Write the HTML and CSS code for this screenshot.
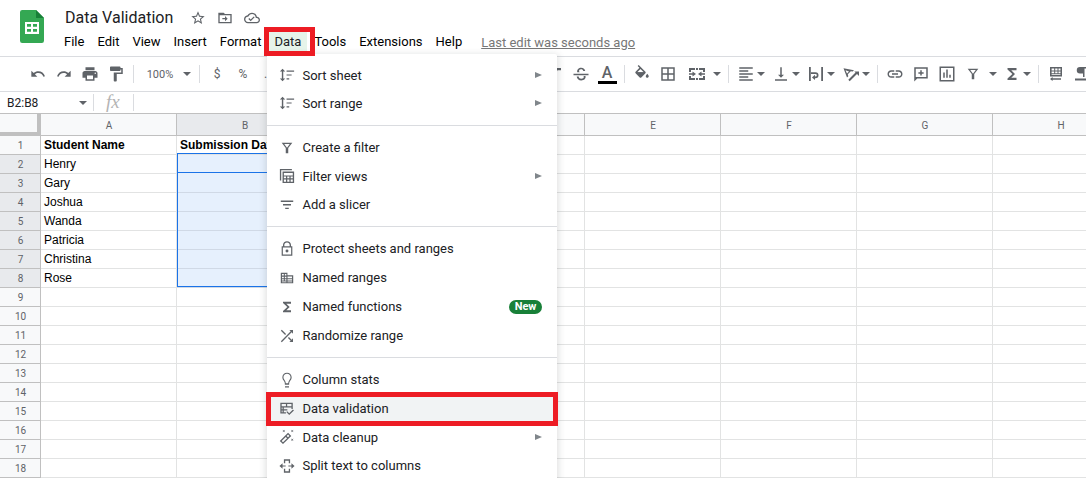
FILE: index.html
```html
<!DOCTYPE html>
<html lang="en">
<head>
<meta charset="utf-8">
<title>Data Validation</title>
<link rel="stylesheet" href="styles.css">
</head>
<body>
<svg class="sprite" aria-hidden="true">
  <symbol id="i-undo" viewBox="0 0 24 24"><path d="M12.5 8c-2.65 0-5.05.99-6.9 2.6L2 7v9h9l-3.62-3.62c1.39-1.16 3.16-1.88 5.12-1.88 3.54 0 6.55 2.31 7.6 5.5l2.37-.78C21.08 11.03 17.15 8 12.500 8z"/></symbol>
  <symbol id="i-redo" viewBox="0 0 24 24"><path d="M18.4 10.6C16.55 8.99 14.15 8 11.5 8c-4.65 0-8.58 3.03-9.96 7.22L3.9 16c1.05-3.19 4.05-5.500 7.600-5.500 1.950 0 3.730.72 5.120 1.880L13 16h9V7l-3.600 3.600z"/></symbol>
  <symbol id="i-print" viewBox="0 0 24 24"><path d="M19 8H5c-1.660 0-3 1.340-3 3v6h4v4h12v-4h4v-6c0-1.660-1.340-3-3-3zm-3 11H8v-5h8v5zm3-7c-.550 0-1-.450-1-1s.450-1 1-1 1 .450 1 1-.450 1-1 1zm-1-9H6v4h12V3z"/></symbol>
  <symbol id="i-paint" viewBox="0 0 24 24"><path d="M18 4V3c0-.550-.450-1-1-1H5c-.550 0-1 .450-1 1v4c0 .550.450 1 1 1h12c.550 0 1-.450 1-1V6h1v4H9v11c0 .550.450 1 1 1h2c.550 0 1-.450 1-1v-9h8V4h-3z"/></symbol>
  <symbol id="i-italic" viewBox="0 0 24 24"><path d="M10 4v3h2.200l-3.400 10H6v3h8v-3h-2.200l3.400-10H20V4z"/></symbol>
  <symbol id="i-strike" viewBox="0 0 24 24"><path d="M2 11.500h20v2H2zM7 9.800C6.200 6 9 3.500 12.200 3.500c3 0 5.200 1.700 5.400 4.500h-2.600c-.2-1.500-1.300-2.300-2.900-2.300-2.700 0-3.500 2.400-1.900 4.100zM6.300 15.300h2.600c.3 2 1.600 2.900 3.500 2.900 2 0 3.300-.9 3.300-2.300 0-.4-.1-.8-.3-1.200h2.600c.8 3.500-1.900 5.800-5.600 5.800-3.500 0-6-2-6.100-5.200z"/></symbol>
  <symbol id="i-fill" viewBox="0 0 24 24"><path d="M16.560 8.940L7.620 0 6.210 1.410l2.380 2.380-5.150 5.150c-.590.590-.590 1.540 0 2.120l5.500 5.500c.290.290.680.440 1.060.440s.770-.150 1.060-.440l5.500-5.500c.590-.580.590-1.530 0-2.120zM5.700 9.500L10 5.200l4.300 4.300zM19 11.500s-2 2.170-2 3.500c0 1.100.900 2 2 2s2-.900 2-2c0-1.330-2-3.500-2-3.500z"/><path d="M4.500 9.500h11L10 15z"/></symbol>
  <symbol id="i-borders" viewBox="0 0 24 24"><path d="M3 3v18h18V3H3zm8 16H5v-6h6v6zm0-8H5V5h6v6zm8 8h-6v-6h6v6zm0-8h-6V5h6v6z"/></symbol>
  <symbol id="i-merge" viewBox="0 0 18 18"><path d="M1 3h6v2H3v2H1zm10 0h6v4h-2V5h-4zM1 11h2v2h4v2H1zm14 0h2v4h-6v-2h4zM8 3h2v2H8zm0 10h2v2H8zM1 8.200h3.500V6.500L8 9l-3.500 2.500V9.800H1zm16 0h-3.500V6.500L10 9l3.500 2.500V9.800H17z"/></symbol>
  <symbol id="i-align" viewBox="0 0 24 24"><path d="M15 15H3v2h12v-2zm0-8H3v2h12V7zM3 13h18v-2H3v2zm0 8h18v-2H3v2zM3 3v2h18V3H3z"/></symbol>
  <symbol id="i-bottom" viewBox="0 0 24 24"><path d="M16 13h-3V3h-2v10H8l4 4 4-4zM4 19v2h16v-2H4z"/></symbol>
  <symbol id="i-wrap" viewBox="0 0 18 18"><path d="M2 2h1.800v14H2zm12.200 0H16v14h-1.800zM4 7.200h4.500a3 3 0 0 1 0 6H8V15l-3-2.600L8 9.800v1.700h.5a1.300 1.300 0 0 0 0-2.600H4z"/></symbol>
  <symbol id="i-rotate" viewBox="0 0 18 18"><path fill-rule="evenodd" d="M1.500 3.200l10.500 2-1.300 1.300-1.900-.3-3 3 .5 2-1.300 1.300zm2 2l1.500 3.300 2-2.100zM6.300 14.800l7.200-7.200-1.200-1.200H17v4.600l-2-2-7.300 7.200z"/></symbol>
  <symbol id="i-link" viewBox="0 0 24 24"><path d="M3.900 12c0-1.710 1.390-3.100 3.100-3.100h4V7H7c-2.760 0-5 2.240-5 5s2.240 5 5 5h4v-1.900H7c-1.710 0-3.100-1.390-3.100-3.100zM8 13h8v-2H8v2zm9-6h-4v1.900h4c1.710 0 3.100 1.390 3.100 3.100s-1.390 3.100-3.100 3.100h-4V17h4c2.760 0 5-2.240 5-5s-2.240-5-5-5z"/></symbol>
  <symbol id="i-comment" viewBox="0 0 24 24"><path d="M21 3H3v19l4-4h14V3zm-2 13H5V5h14v11zm-8-2h2v-2.500h2.500v-2H13V7h-2v2.500H8.500v2H11z"/></symbol>
  <symbol id="i-chart" viewBox="0 0 24 24"><path d="M2 2v20h20V2zm18 18H4V4h16zM7 10h2v7H7zm4-4h2v11h-2zm4 7h2v4h-2z"/></symbol>
  <symbol id="i-filter" viewBox="0 0 18 18"><path fill-rule="evenodd" d="M3 3h12l-4.600 6V15H7.600V9zm2.900 1.500L9 8.600l3.100-4.100z"/></symbol>
  <symbol id="i-sigma" viewBox="0 0 24 24"><path d="M18 4H6v2l6.500 6L6 18v2h12v-3h-7l5-5-5-5h7z"/></symbol>
  <symbol id="i-sheet" viewBox="0 0 18 18"><path fill-rule="evenodd" d="M3 2h12v9.500H3zm1.600 1.500v2h2.600v-2zm3.600 0v2h2.300v-2zm3.300 0v2h2v-2zm-6.900 3v1.700h2.600V6.500zm3.600 0v1.700h2.300V6.500zm3.300 0v1.700h2V6.500zM4.600 9.200V10h8.900v-.8zM3 14l2.600-2v1.200H14v1.600H5.600V16z"/></symbol>
  <symbol id="i-para" viewBox="0 0 18 18"><path d="M7 2h9v1.500h-1.500V12H13V3.500h-1.500V12H10V8.500H7A3.250 3.250 0 0 1 7 2zM2 13.500h14v2H2z"/></symbol>
  <symbol id="i-star" viewBox="0 0 24 24"><path d="M22 9.240l-7.190-.620L12 2 9.190 8.630 2 9.240l5.460 4.730L5.820 21 12 17.270 18.180 21l-1.630-7.030L22 9.240zM12 15.400l-3.760 2.270 1-4.280-3.320-2.880 4.380-.380L12 6.100l1.710 4.040 4.380.380-3.320 2.880 1 4.280L12 15.400z"/></symbol>
  <symbol id="i-move" viewBox="0 0 24 24"><path d="M20 6h-8l-2-2H2v16h20V6h-2zm0 12H4V8h16v10zm-8-1l4-4-4-4v3H8v2h4z"/></symbol>
  <symbol id="i-cloud" viewBox="0 0 24 24"><path d="M19.350 10.040C18.670 6.590 15.640 4 12 4 9.110 4 6.600 5.640 5.350 8.040 2.340 8.360 0 10.910 0 14c0 3.310 2.690 6 6 6h13c2.760 0 5-2.240 5-5 0-2.640-2.050-4.780-4.650-4.960zM19 18H6c-2.210 0-4-1.790-4-4 0-2.050 1.530-3.760 3.560-3.970l1.070-.110.500-.950C8.080 7.140 9.940 6 12 6c2.620 0 4.880 1.860 5.390 4.430l.300 1.500 1.530.110c1.560.100 2.780 1.410 2.780 2.960 0 1.650-1.350 3-3 3zm-9-3.820l-2.090-2.090L6.500 13.500 10 17l6.010-6.010-1.410-1.410z"/></symbol>
  <symbol id="i-sort" viewBox="0 0 18 18"><path d="M4 2l3 3.200H4.800v7.600H7L4 16l-3-3.200h2.200V5.200H1zM8.500 4H17v1.400H8.500zm0 4.300h5.700v1.400H8.500zm0 4.300h3v1.400h-3z"/></symbol>
  <symbol id="i-views" viewBox="0 0 18 18"><path fill-rule="evenodd" d="M1 1h13.500v1.500h-12V14H1zM4 4h13v13H4zm1.500 1.500v2.800h10V5.500zm0 4.200v1.900h2.400V9.700zm3.800 0v1.900h2.400V9.700zm3.800 0v1.900h2.400V9.700zM5.500 13v2.500h2.400V13zm3.800 0v2.500h2.400V13zm3.800 0v2.500h2.400V13z"/></symbol>
  <symbol id="i-slicer" viewBox="0 0 18 18"><path d="M2 4h14v1.500H2zm2.500 4h9v1.500h-9zM7 12h4v1.500H7z"/></symbol>
  <symbol id="i-lock" viewBox="0 0 24 24"><path d="M18 8V6c0-3-2.500-5.500-6-5.500S6 3 6 6v2H4v14h16V8zM8 6c0-2.200 1.700-3.700 4-3.700S16 3.800 16 6v2H8zm10.200 14.300H5.800V9.800h12.400zM12 17.200a2.200 2.200 0 1 0 0-4.400 2.200 2.200 0 0 0 0 4.400z"/></symbol>
  <symbol id="i-ranges" viewBox="0 0 18 18"><path fill-rule="evenodd" d="M2 3h7.500v3H16v9H2zm1.400 1.400v1.900h2V4.400zm3.200 0v1.900h1.700V4.400zM3.400 7.500v1.800h2V7.500zm3.200 0v1.800h1.700V7.500zm-3.200 3v1.200h2v-1.200zm3.200 0v1.200h1.700v-1.200zm-3.200 2.400v.8h4.900v-.8zm6.200-5.500v1.900h5V7.400zm0 3.100v1.200h5v-1.200zm0 2.400v.8h5v-.8z"/></symbol>
  <symbol id="i-shuffle" viewBox="0 0 24 24"><path d="M10.590 9.170L4.200 2.800 2.800 4.200l6.370 6.370 1.420-1.400zM15.500 3l2.040 2.040L2.800 19.800l1.400 1.400L18.960 6.460 21 8.500V3h-5.500zm-.670 10.410l-1.410 1.410 4.130 4.130L15.500 21H21v-5.500l-2.040 2.040-4.130-4.130z"/></symbol>
  <symbol id="i-bulb" viewBox="0 0 24 24"><path d="M9 21.500h6v1.800H9zm3-20.500c-4 0-7 3-7 7 0 3 1.500 4.500 3 6.500.6 1 .8 2 .8 4.500h6.400c0-2.500.2-3.500.8-4.500 1.500-2 3-3.500 3-6.500 0-4-3-7-7-7zm1.800 16h-3.600c0-1.600-.4-2.800-1.200-4-1.200-1.700-2.300-2.800-2.300-5C6.700 5 9 2.800 12 2.800S17.300 5 17.300 8c0 2.200-1.100 3.300-2.300 5-.8 1.200-1.200 2.400-1.200 4z"/></symbol>
  <symbol id="i-valid" viewBox="0 0 18 18"><path fill-rule="evenodd" d="M1.500 2h14v7H14V7.400H5.400v1.800h4v1.400h-4v2h2.400V14H1.500zM3 3.500V6h4.800V3.500zm6.200 0V6H14V3.500zM3 7.400v1.800h1V7.400zm0 3.200v2h1v-2zM8.200 12.500l1.100-1 2.200 2.200 4.200-4.200 1.100 1.100-5.300 5.200z"/></symbol>
  <symbol id="i-wand" viewBox="0 0 18 18"><path fill-rule="evenodd" d="M10.200 4.200l3.600 3.600-9.300 9.200L.9 13.400zm0 2.100L8.600 7.900l1.500 1.500 1.600-1.600zM3 13.400l1.500 1.500 4.600-4.500L7.600 8.900z"/><path d="M4 .8l1.400.8L6.800.8 6 2.200l.8 1.400-1.400-.8-1.400.8.800-1.400zM13.500.8l1.400.8 1.400-.8-.8 1.400.8 1.400-1.400-.8-1.400.8.800-1.400zM13.500 10.600l1.400.8 1.400-.8-.8 1.400.8 1.400-1.400-.8-1.400.8.8-1.400z"/></symbol>
  <symbol id="i-split" viewBox="0 0 18 18"><path d="M5.500 1.500h7V6H11V3H7v3H5.500zm0 10.500H7v3h4v-3h1.500v4.500h-7zM.5 9L4 5.800v2.500h3.500v1.400H4v2.500zm17 0L14 5.800v2.500h-3.500v1.400H14v2.500z"/></symbol>
</svg>

<header class="header">
  <svg class="logo" viewBox="0 0 24 33" aria-label="Sheets">
    <path fill="#34a853" d="M2.200 0H16l8 8v22.800a2.200 2.200 0 0 1-2.200 2.200H2.200A2.200 2.200 0 0 1 0 30.800V2.200A2.200 2.200 0 0 1 2.200 0z"/>
    <path fill="#188038" d="M16 0l8 8h-8z"/>
    <path fill="#fff" fill-rule="evenodd" d="M5 12h14v12H5zm2 2v2.800h4V14zm6 0v2.800h4V14zm-6 5v2.800h4V19zm6 0v2.800h4V19z"/>
  </svg>
  <div class="heading">
    <div class="title-row">
      <h1 class="title">Data Validation</h1>
      <button class="title-btn" aria-label="Star"><svg><use href="#i-star"/></svg></button>
      <button class="title-btn" aria-label="Move"><svg><use href="#i-move"/></svg></button>
      <button class="title-btn" aria-label="Document status"><svg><use href="#i-cloud"/></svg></button>
    </div>
    <nav class="menubar">
      <button class="menu-btn">File</button>
      <button class="menu-btn">Edit</button>
      <button class="menu-btn">View</button>
      <button class="menu-btn">Insert</button>
      <button class="menu-btn">Format</button>
      <div class="menu-anchor">
        <button class="menu-btn open" aria-expanded="true">Data</button>
        <div class="menu" role="menu">
          <div class="group first">
            <button class="item sub" role="menuitem"><svg><use href="#i-sort"/></svg><span>Sort sheet</span></button>
            <button class="item sub" role="menuitem"><svg><use href="#i-sort"/></svg><span>Sort range</span></button>
          </div>
          <div class="group">
            <button class="item" role="menuitem"><svg><use href="#i-filter"/></svg><span>Create a filter</span></button>
            <button class="item sub" role="menuitem"><svg><use href="#i-views"/></svg><span>Filter views</span></button>
            <button class="item" role="menuitem"><svg><use href="#i-slicer"/></svg><span>Add a slicer</span></button>
          </div>
          <div class="group">
            <button class="item" role="menuitem"><svg><use href="#i-lock"/></svg><span>Protect sheets and ranges</span></button>
            <button class="item" role="menuitem"><svg><use href="#i-ranges"/></svg><span>Named ranges</span></button>
            <button class="item" role="menuitem"><svg><use href="#i-sigma"/></svg><span>Named functions</span><span class="badge">New</span></button>
            <button class="item" role="menuitem"><svg><use href="#i-shuffle"/></svg><span>Randomize range</span></button>
          </div>
          <div class="group">
            <button class="item" role="menuitem"><svg><use href="#i-bulb"/></svg><span>Column stats</span></button>
            <button class="item hover marked" role="menuitem"><svg><use href="#i-valid"/></svg><span>Data validation</span></button>
            <button class="item sub" role="menuitem"><svg><use href="#i-wand"/></svg><span>Data cleanup</span></button>
            <button class="item" role="menuitem"><svg><use href="#i-split"/></svg><span>Split text to columns</span></button>
          </div>
        </div>
        <div class="mark"></div>
      </div>
      <button class="menu-btn">Tools</button>
      <button class="menu-btn">Extensions</button>
      <button class="menu-btn">Help</button>
      <a class="last-edit" href="#">Last edit was seconds ago</a>
    </nav>
  </div>
</header>

<div class="toolbar" role="toolbar">
  <button class="tool" aria-label="Undo"><svg class="small"><use href="#i-undo"/></svg></button>
  <button class="tool" aria-label="Redo"><svg class="small"><use href="#i-redo"/></svg></button>
  <button class="tool" aria-label="Print"><svg><use href="#i-print"/></svg></button>
  <button class="tool" aria-label="Paint format"><svg><use href="#i-paint"/></svg></button>
  <span class="sep"></span>
  <button class="tool zoom">100%<i class="caret"></i></button>
  <span class="sep"></span>
  <button class="tool">$</button>
  <button class="tool">%</button>
  <button class="tool">.0</button>
  <button class="tool" aria-label="Increase decimal places"></button>
  <button class="tool drop" aria-label="More formats"></button>
  <span class="sep"></span>
  <button class="tool font" aria-label="Font"></button>
  <span class="sep"></span>
  <button class="tool size" aria-label="Font size"></button>
  <span class="sep"></span>
  <button class="tool" aria-label="Bold"></button>
  <button class="tool" aria-label="Italic"><svg><use href="#i-italic"/></svg></button>
  <button class="tool" aria-label="Strikethrough"><svg><use href="#i-strike"/></svg></button>
  <button class="tool" aria-label="Text color"><span class="text-color">A</span></button>
  <span class="sep"></span>
  <button class="tool" aria-label="Fill color"><svg><use href="#i-fill"/></svg></button>
  <button class="tool" aria-label="Borders"><svg><use href="#i-borders"/></svg></button>
  <button class="tool merge" aria-label="Merge cells"><svg><use href="#i-merge"/></svg><i class="caret"></i></button>
  <span class="sep"></span>
  <button class="tool drop" aria-label="Horizontal align"><svg><use href="#i-align"/></svg><i class="caret"></i></button>
  <button class="tool drop" aria-label="Vertical align"><svg><use href="#i-bottom"/></svg><i class="caret"></i></button>
  <button class="tool drop" aria-label="Text wrapping"><svg><use href="#i-wrap"/></svg><i class="caret"></i></button>
  <button class="tool drop" aria-label="Text rotation"><svg><use href="#i-rotate"/></svg><i class="caret"></i></button>
  <span class="sep"></span>
  <button class="tool" aria-label="Insert link"><svg><use href="#i-link"/></svg></button>
  <button class="tool" aria-label="Insert comment"><svg><use href="#i-comment"/></svg></button>
  <button class="tool" aria-label="Insert chart"><svg><use href="#i-chart"/></svg></button>
  <button class="tool" aria-label="Create a filter"><svg class="small"><use href="#i-filter"/></svg></button>
  <button class="tool narrow" aria-label="Filter views"><i class="caret"></i></button>
  <button class="tool drop" aria-label="Functions"><svg><use href="#i-sigma"/></svg><i class="caret"></i></button>
  <span class="sep"></span>
  <button class="tool" aria-label="Sheet direction"><svg><use href="#i-sheet"/></svg></button>
  <button class="tool" aria-label="Text direction"><svg><use href="#i-para"/></svg></button>
</div>

<div class="formula-bar">
  <input class="name-box" aria-label="Name box" value="B2:B8">
  <i class="caret"></i>
  <span class="fx">fx</span>
  <input class="formula" aria-label="Formula">
</div>

<main class="sheet">
  <table class="grid">
    <colgroup><col class="col-num"><col><col><col><col><col><col><col><col></colgroup>
    <thead>
      <tr><th class="corner"></th><th>A</th><th class="on">B</th><th>C</th><th>D</th><th>E</th><th>F</th><th>G</th><th>H</th></tr>
    </thead>
    <tbody>
      <tr><th>1</th><td class="bold">Student Name</td><td class="bold">Submission Date</td><td></td><td></td><td></td><td></td><td></td><td></td></tr>
      <tr><th class="on">2</th><td>Henry</td><td class="sel active"><div class="range"></div></td><td></td><td></td><td></td><td></td><td></td><td></td></tr>
      <tr><th class="on">3</th><td>Gary</td><td class="sel"></td><td></td><td></td><td></td><td></td><td></td><td></td></tr>
      <tr><th class="on">4</th><td>Joshua</td><td class="sel"></td><td></td><td></td><td></td><td></td><td></td><td></td></tr>
      <tr><th class="on">5</th><td>Wanda</td><td class="sel"></td><td></td><td></td><td></td><td></td><td></td><td></td></tr>
      <tr><th class="on">6</th><td>Patricia</td><td class="sel"></td><td></td><td></td><td></td><td></td><td></td><td></td></tr>
      <tr><th class="on">7</th><td>Christina</td><td class="sel"></td><td></td><td></td><td></td><td></td><td></td><td></td></tr>
      <tr><th class="on">8</th><td>Rose</td><td class="sel"></td><td></td><td></td><td></td><td></td><td></td><td></td></tr>
      <tr><th>9</th><td></td><td></td><td></td><td></td><td></td><td></td><td></td><td></td></tr>
      <tr><th>10</th><td></td><td></td><td></td><td></td><td></td><td></td><td></td><td></td></tr>
      <tr><th>11</th><td></td><td></td><td></td><td></td><td></td><td></td><td></td><td></td></tr>
      <tr><th>12</th><td></td><td></td><td></td><td></td><td></td><td></td><td></td><td></td></tr>
      <tr><th>13</th><td></td><td></td><td></td><td></td><td></td><td></td><td></td><td></td></tr>
      <tr><th>14</th><td></td><td></td><td></td><td></td><td></td><td></td><td></td><td></td></tr>
      <tr><th>15</th><td></td><td></td><td></td><td></td><td></td><td></td><td></td><td></td></tr>
      <tr><th>16</th><td></td><td></td><td></td><td></td><td></td><td></td><td></td><td></td></tr>
      <tr><th>17</th><td></td><td></td><td></td><td></td><td></td><td></td><td></td><td></td></tr>
      <tr><th>18</th><td></td><td></td><td></td><td></td><td></td><td></td><td></td><td></td></tr>
    </tbody>
  </table>
</main>
</body>
</html>
```

FILE: styles.css
```css
* {
  box-sizing: border-box;
}

body {
  margin: 0;
  height: 100vh;
  overflow: hidden;
  background: #fff;
  color: #202124;
  font-family: Roboto, "Liberation Sans", sans-serif;
  font-size: 13px;
}

button,
input {
  margin: 0;
  padding: 0;
  border: 0;
  background: none;
  color: inherit;
  font: inherit;
}

svg {
  display: block;
  flex: none;
  fill: #5f6368;
}

.sprite {
  display: none;
}

.header {
  display: flex;
  height: 57px;
  border-bottom: 1px solid #dadce0;
}

.logo {
  width: 24px;
  height: 33px;
  margin: 10px 13px 0 20px;
}

.title-row {
  display: flex;
  align-items: center;
  height: 24px;
  margin-top: 6px;
  padding-left: 8px;
}

.title {
  margin: 0 17px 0 0;
  font-size: 16px;
  line-height: 24px;
  font-weight: 400;
}

.title-btn {
  margin-right: 11px;
}

.title-btn svg {
  width: 16px;
  height: 16px;
}

.menubar {
  display: flex;
  align-items: center;
  gap: 1px;
  height: 24px;
  padding-left: 1px;
}

.menu-btn {
  height: 20px;
  padding: 0 6px;
  line-height: 20px;
  white-space: nowrap;
  color: #000;
}

.menu-btn.open {
  background: #e6f4ea;
  color: #202124;
}

.menu-anchor {
  position: relative;
}

.last-edit {
  margin-left: 12px;
  color: #777;
  white-space: nowrap;
}

.mark {
  position: absolute;
  z-index: 3;
  inset: -5px -8px -4px -4px;
  border: 5px solid #ed1c24;
}

.menu {
  position: absolute;
  z-index: 2;
  top: 22px;
  left: -1px;
  width: 290px;
  background: #fff;
  border-radius: 2px;
  box-shadow: 0 2px 6px 2px rgba(60, 64, 67, 0.15);
}

.group {
  padding: 7px 0;
  border-bottom: 1px solid #dadce0;
}

.group.first {
  padding-bottom: 8px;
}

.group:last-child {
  border-bottom: 0;
}

.item {
  position: relative;
  display: flex;
  align-items: center;
  gap: 7px;
  width: 100%;
  height: 29px;
  padding: 0 15px 0 12px;
  text-align: left;
  white-space: nowrap;
}

.item svg {
  width: 16px;
  height: 16px;
}

.item.sub {
  height: 28px;
}

.item.sub::after {
  content: "";
  margin-left: auto;
  border: solid transparent;
  border-width: 3px 0 3px 7px;
  border-left-color: #80868b;
}

.item.hover {
  background: #f1f3f4;
}

.item.marked::before {
  content: "";
  position: absolute;
  inset: -2px -1px -3px -1px;
  border: 5px solid #ed1c24;
}

.badge {
  margin-left: auto;
  padding: 0 6px;
  border-radius: 7px;
  background: #188038;
  color: #fff;
  font-size: 11px;
  line-height: 14px;
  font-weight: 700;
}

.toolbar {
  display: flex;
  align-items: center;
  height: 35px;
  padding-left: 25px;
  overflow: hidden;
  border-bottom: 1px solid #dadce0;
  color: #5f6368;
  font-size: 12px;
}

.tool {
  display: flex;
  flex: none;
  align-items: center;
  justify-content: center;
  width: 26px;
  height: 26px;
}

.tool svg {
  width: 18px;
  height: 18px;
}

.tool svg.small {
  width: 16px;
  height: 16px;
}

.tool.drop {
  gap: 2px;
  width: 35px;
}

.tool.merge {
  gap: 7px;
  width: 43px;
  padding-left: 4px;
}

.tool.zoom {
  gap: 10px;
  width: 57px;
  padding-left: 5px;
  font-size: 11px;
}

.tool.font {
  width: 102px;
}

.tool.size {
  width: 44px;
}

.tool.narrow {
  width: 13px;
}

.text-color {
  width: 19px;
  border-bottom: 3px solid #000;
  font-size: 16px;
  line-height: 17px;
  font-weight: 500;
}

.sep {
  flex: none;
  width: 1px;
  height: 18px;
  margin: 0 4px;
  background: #dadce0;
}

.caret {
  flex: none;
  border: solid transparent;
  border-width: 4px 4px 0;
  border-top-color: #5f6368;
}

.formula-bar {
  display: flex;
  align-items: center;
  height: 21px;
}

.name-box {
  width: 72px;
  margin-left: 7px;
  font-size: 12px;
}

.fx {
  width: 41px;
  height: 17px;
  margin-left: 6px;
  padding-left: 12px;
  border: solid #dadce0;
  border-width: 0 1px;
  color: #b4b4b4;
  font-family: "Liberation Serif", serif;
  font-size: 19px;
  font-style: italic;
  line-height: 15px;
}

.formula {
  flex: 1;
}

.sheet {
  overflow: hidden;
}

.grid {
  width: 1129px;
  table-layout: fixed;
  border-spacing: 0;
  border-top: 1px solid #c0c0c0;
}

.col-num {
  width: 41px;
}

.grid th,
.grid td {
  height: 19px;
  padding: 1px 0 0;
  border: solid #e2e3e3;
  border-width: 0 1px 1px 0;
  line-height: 17px;
}

.grid th {
  padding-left: 1px;
  border-color: #c0c0c0;
  background: #f8f9fa;
  color: #5f6368;
  font-size: 10px;
  font-weight: 400;
}

.grid thead th {
  height: 22px;
}

.grid th.on {
  background: #e8eaed;
}

.grid .corner {
  border-right: 4px solid #c0c0c0;
  border-bottom-width: 4px;
}

.grid td {
  padding-left: 3px;
  color: #000;
  font-family: "Liberation Sans", Arial, sans-serif;
  font-size: 12px;
  white-space: nowrap;
}

.grid .bold {
  font-weight: 700;
}

.grid .sel {
  background: #e6f0fd;
  border-color: #d0d9e6;
}

.grid .active {
  position: relative;
  border-bottom-color: #e6f0fd;
  box-shadow: inset 0 -1px #1a73e8;
}

.range {
  position: absolute;
  top: -2px;
  left: 0;
  width: 136px;
  height: 134px;
  border: 1px solid #1a73e8;
}
```
